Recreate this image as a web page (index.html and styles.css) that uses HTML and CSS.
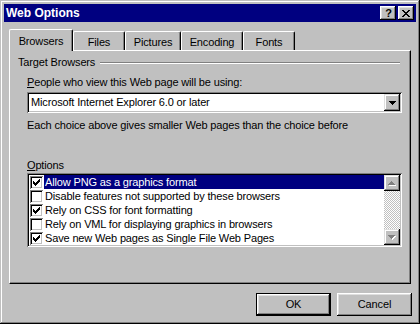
FILE: index.html
```html
<!DOCTYPE html>
<html>
<head>
<meta charset="utf-8">
<title>Web Options</title>
<link rel="stylesheet" href="styles.css">
</head>
<body>
<div class="window">
  <div class="titlebar">
    <span class="title">Web Options</span>
    <div class="caption-btns">
      <div class="cap-btn help">?</div>
      <div class="cap-btn close">
        <svg width="8" height="7" viewBox="0 0 8 7" shape-rendering="crispEdges">
          <rect x="0" y="0" width="2" height="1"/><rect x="6" y="0" width="2" height="1"/>
          <rect x="1" y="1" width="2" height="1"/><rect x="5" y="1" width="2" height="1"/>
          <rect x="2" y="2" width="4" height="1"/>
          <rect x="3" y="3" width="2" height="1"/>
          <rect x="2" y="4" width="4" height="1"/>
          <rect x="1" y="5" width="2" height="1"/><rect x="5" y="5" width="2" height="1"/>
          <rect x="0" y="6" width="2" height="1"/><rect x="6" y="6" width="2" height="1"/>
        </svg>
      </div>
    </div>
  </div>

  <div class="tabs">
    <div class="tab active w-browsers">Browsers</div>
    <div class="tab w-files">Files</div>
    <div class="tab w-pictures">Pictures</div>
    <div class="tab w-encoding">Encoding</div>
    <div class="tab w-fonts">Fonts</div>
  </div>

  <div class="panel">
    <div class="group-head"><span>Target Browsers</span><span class="etch"></span></div>
    <div class="label people"><u>P</u>eople who view this Web page will be using:</div>
    <div class="combo">
      <span class="combo-text">Microsoft Internet Explorer 6.0 or later</span>
      <span class="drop-btn">
        <svg width="7" height="4" viewBox="0 0 7 4" shape-rendering="crispEdges">
          <rect x="0" y="0" width="7" height="1"/><rect x="1" y="1" width="5" height="1"/>
          <rect x="2" y="2" width="3" height="1"/><rect x="3" y="3" width="1" height="1"/>
        </svg>
      </span>
    </div>
    <div class="hint">Each choice above gives smaller Web pages than the choice before</div>
    <div class="label options"><u>O</u>ptions</div>
    <div class="listbox">
      <div class="items">
        <div class="item selected"><span class="check on"></span><span class="item-text">Allow PNG as a graphics format</span></div>
        <div class="item"><span class="check"></span><span class="item-text">Disable features not supported by these browsers</span></div>
        <div class="item"><span class="check on"></span><span class="item-text">Rely on CSS for font formatting</span></div>
        <div class="item"><span class="check"></span><span class="item-text">Rely on VML for displaying graphics in browsers</span></div>
        <div class="item"><span class="check on"></span><span class="item-text">Save new Web pages as Single File Web Pages</span></div>
      </div>
      <div class="vscroll">
        <div class="sb-btn">
          <svg width="8" height="5" viewBox="0 0 8 5" shape-rendering="crispEdges">
            <g fill="#fff"><rect x="4" y="1" width="1" height="1"/><rect x="3" y="2" width="3" height="1"/><rect x="2" y="3" width="5" height="1"/><rect x="1" y="4" width="7" height="1"/></g>
            <g fill="#808080"><rect x="3" y="0" width="1" height="1"/><rect x="2" y="1" width="3" height="1"/><rect x="1" y="2" width="5" height="1"/><rect x="0" y="3" width="7" height="1"/></g>
          </svg>
        </div>
        <div class="sb-track"></div>
        <div class="sb-btn">
          <svg width="8" height="5" viewBox="0 0 8 5" shape-rendering="crispEdges">
            <g fill="#fff"><rect x="1" y="1" width="7" height="1"/><rect x="2" y="2" width="5" height="1"/><rect x="3" y="3" width="3" height="1"/><rect x="4" y="4" width="1" height="1"/></g>
            <g fill="#808080"><rect x="0" y="0" width="7" height="1"/><rect x="1" y="1" width="5" height="1"/><rect x="2" y="2" width="3" height="1"/><rect x="3" y="3" width="1" height="1"/></g>
          </svg>
        </div>
      </div>
    </div>
  </div>

  <div class="buttons">
    <div class="btn default">OK</div>
    <div class="btn">Cancel</div>
  </div>
</div>
</body>
</html>
```

FILE: styles.css
```css
* { box-sizing: border-box; margin: 0; padding: 0; }

body {
  margin: 0;
  background: #c0c0c0;
  font: 11px/13px "Liberation Sans", Arial, sans-serif;
  letter-spacing: -0.15px;
  color: #000;
}

.window {
  width: 420px;
  height: 324px;
  padding: 4px;
  background: #c0c0c0;
  box-shadow: inset -1px -1px #000, inset 1px 1px #c0c0c0, inset -2px -2px #808080, inset 2px 2px #fff;
  display: flex;
  flex-direction: column;
}

.titlebar {
  height: 18px;
  background: #000080;
  color: #fff;
  display: flex;
  align-items: center;
  padding: 0 2px 0 2px;
}

.title {
  flex: 1;
  font-weight: bold;
  font-size: 12px;
  letter-spacing: 0;
}

.caption-btns { display: flex; gap: 2px; }

.cap-btn {
  width: 16px;
  height: 14px;
  background: #c0c0c0;
  color: #000;
  box-shadow: inset -1px -1px #000, inset 1px 1px #fff, inset -2px -2px #808080, inset 2px 2px #dfdfdf;
  display: flex;
  align-items: center;
  justify-content: center;
  font-weight: bold;
  font-size: 11px;
  line-height: 14px;
}

.cap-btn svg { display: block; fill: #000; }
.help { padding-left: 1px; }

.tabs {
  display: flex;
  height: 22px;
  margin: 7px 0 -1px 5px;
  position: relative;
  z-index: 1;
}

.tab {
  margin-top: 2px;
  height: 19px;
  padding-top: 4px;
  text-align: center;
  background: #c0c0c0;
  border-left: 1px solid #fff;
  border-top: 1px solid #fff;
  border-right: 1px solid #000;
  box-shadow: inset -1px 0 #808080;
  border-radius: 2px 2px 0 0;
}

.tab.active {
  margin-top: 0;
  height: 22px;
  padding-top: 5px;
}

.w-browsers { width: 64px; }
.w-files { width: 52px; }
.w-pictures { width: 56px; }
.w-encoding { width: 62px; }
.w-fonts { width: 52px; }

.panel {
  margin-left: 5px;
  width: 402px;
  height: 234px;
  border-left: 1px solid #fff;
  border-top: 1px solid #fff;
  border-right: 1px solid #000;
  border-bottom: 1px solid #000;
  box-shadow: inset -1px -1px #808080;
  display: flex;
  flex-direction: column;
}

.group-head {
  display: flex;
  align-items: center;
  margin: 5px 10px 0 8px;
}

.etch {
  flex: 1;
  height: 2px;
  margin-left: 5px;
  border-top: 1px solid #808080;
  border-bottom: 1px solid #fff;
}

.label, .hint { margin-left: 17px; }
.people { margin-top: 7px; }
.options { margin-top: 27px; }
.hint { margin-top: 6px; }

.combo {
  margin: 3px 0 0 17px;
  width: 375px;
  height: 21px;
  background: #fff;
  box-shadow: inset 1px 1px #808080, inset -1px -1px #fff, inset 2px 2px #000, inset -2px -2px #c0c0c0;
  display: flex;
  align-items: center;
  padding: 2px;
}

.combo-text { flex: 1; padding-left: 2px; }

.drop-btn {
  width: 16px;
  height: 17px;
  background: #c0c0c0;
  box-shadow: inset -1px -1px #000, inset 1px 1px #dfdfdf, inset -2px -2px #808080, inset 2px 2px #fff;
  display: flex;
  align-items: center;
  justify-content: center;
}

.drop-btn svg { display: block; fill: #000; }

.listbox {
  margin: 1px 0 0 17px;
  width: 375px;
  height: 74px;
  background: #fff;
  box-shadow: inset 1px 1px #808080, inset -1px -1px #fff, inset 2px 2px #000, inset -2px -2px #c0c0c0;
  padding: 2px;
  display: flex;
}

.items { flex: 1; overflow: hidden; }

.item {
  height: 14px;
  display: flex;
  align-items: center;
}

.check {
  width: 13px;
  height: 13px;
  margin-left: 1px;
  margin-right: 1px;
  flex: none;
  background: #fff;
  box-shadow: inset 1px 1px #808080, inset -1px -1px #fff, inset 2px 2px #000, inset -2px -2px #c0c0c0;
}

.check.on {
  background:
    linear-gradient(#000, #000) 3px 5px / 1px 3px no-repeat,
    linear-gradient(#000, #000) 4px 6px / 1px 3px no-repeat,
    linear-gradient(#000, #000) 5px 7px / 1px 3px no-repeat,
    linear-gradient(#000, #000) 6px 6px / 1px 3px no-repeat,
    linear-gradient(#000, #000) 7px 5px / 1px 3px no-repeat,
    linear-gradient(#000, #000) 8px 4px / 1px 3px no-repeat,
    linear-gradient(#000, #000) 9px 3px / 1px 3px no-repeat,
    #fff;
}

.item-text {
  flex: 1;
  height: 14px;
  line-height: 14px;
  padding-left: 1px;
  white-space: nowrap;
}

.item.selected .item-text {
  background: #000080;
  color: #fff;
}

.vscroll {
  width: 16px;
  display: flex;
  flex-direction: column;
}

.sb-btn {
  height: 16px;
  background: #c0c0c0;
  box-shadow: inset -1px -1px #000, inset 1px 1px #dfdfdf, inset -2px -2px #808080, inset 2px 2px #fff;
  display: flex;
  align-items: center;
  justify-content: center;
}

.sb-btn svg { display: block; }

.sb-track {
  flex: 1;
  background: repeating-conic-gradient(#c0c0c0 0 25%, #fff 0 50%) 0 0 / 2px 2px;
}

.buttons {
  display: flex;
  justify-content: flex-end;
  gap: 6px;
  margin: 9px 4px 0 0;
}

.btn {
  width: 75px;
  height: 23px;
  background: #c0c0c0;
  box-shadow: inset -1px -1px #000, inset 1px 1px #fff, inset -2px -2px #808080, inset 2px 2px #dfdfdf;
  display: flex;
  align-items: center;
  justify-content: center;
}

.btn.default {
  border: 1px solid #000;
}
```
